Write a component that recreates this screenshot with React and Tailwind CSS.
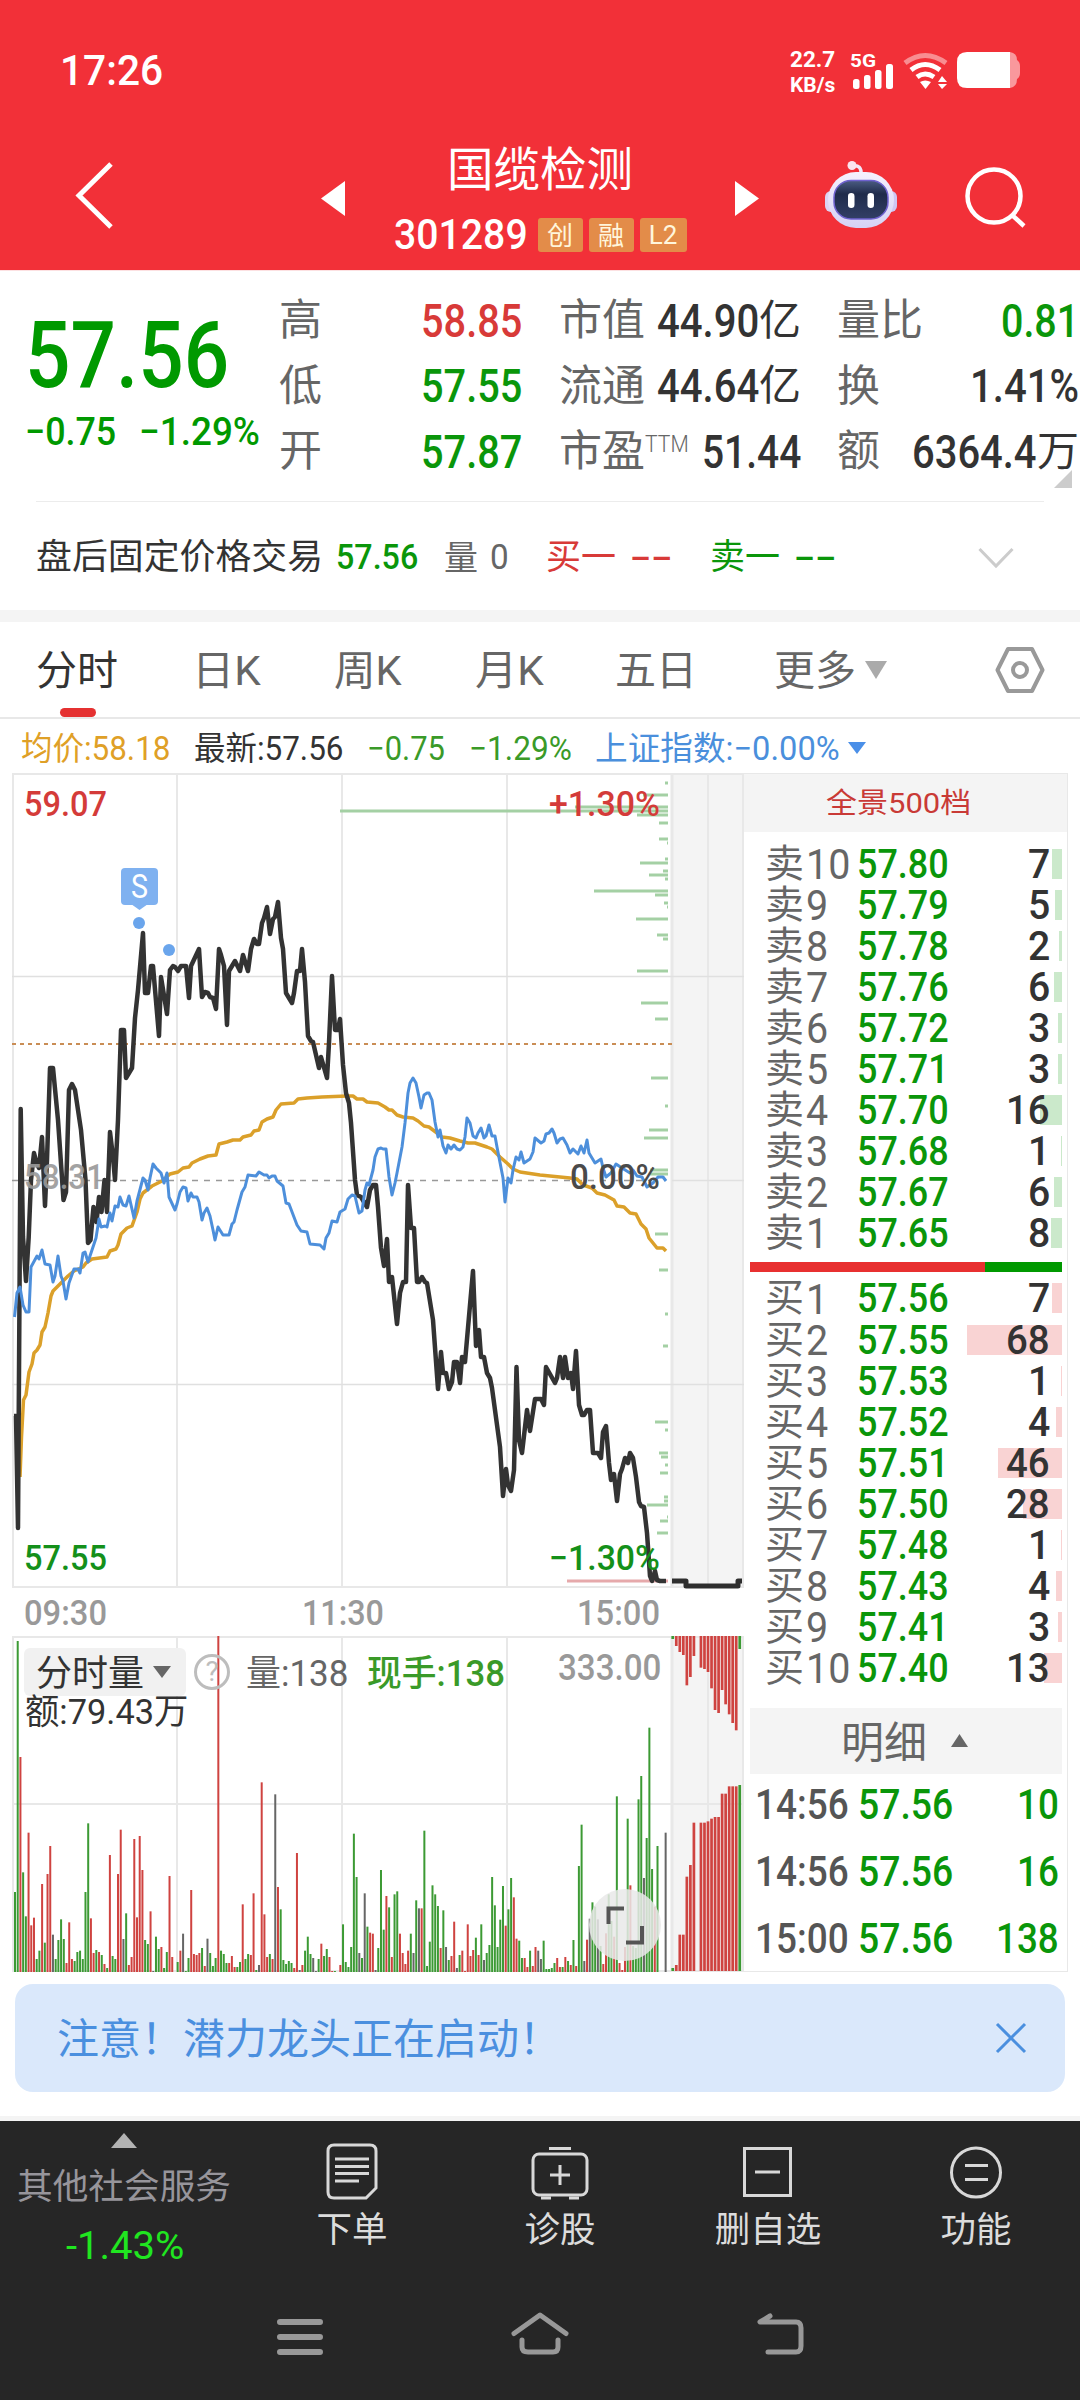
import React, { useLayoutEffect, useRef, useState } from 'react'
import clsx from 'clsx'

/* ---------- data ---------- */

const stats = [
  [
    { label: '高', value: '58.85', w: 101, color: 'text-[#d83a38]' },
    { label: '低', value: '57.55', w: 101, color: 'text-[#0a960a]' },
    { label: '开', value: '57.87', w: 101, color: 'text-[#0a960a]' },
  ],
  [
    { label: '市值', value: '44.90', unit: '亿', w: 102, color: 'text-[#333333]' },
    { label: '流通', value: '44.64', unit: '亿', w: 102, color: 'text-[#333333]' },
    { label: '市盈', sup: 'TTM', value: '51.44', w: 99, color: 'text-[#333333]' },
  ],
  [
    { label: '量比', value: '0.81', w: 78, color: 'text-[#0a960a]' },
    { label: '换', value: '1.41%', w: 109, color: 'text-[#333333]' },
    { label: '额', value: '6364.4', unit: '万', w: 125, color: 'text-[#333333]' },
  ],
]

const sells = [
  ['10', '57.80', 7], ['9', '57.79', 5], ['8', '57.78', 2], ['7', '57.76', 6], ['6', '57.72', 3],
  ['5', '57.71', 3], ['4', '57.70', 16], ['3', '57.68', 1], ['2', '57.67', 6], ['1', '57.65', 8],
]

const buys = [
  ['1', '57.56', 7], ['2', '57.55', 68], ['3', '57.53', 1], ['4', '57.52', 4], ['5', '57.51', 46],
  ['6', '57.50', 28], ['7', '57.48', 1], ['8', '57.43', 4], ['9', '57.41', 3], ['10', '57.40', 13],
]

const ticks = [
  ['14:56', '57.56', '10'],
  ['14:56', '57.56', '16'],
  ['15:00', '57.56', '138'],
]

const priceLine =
  '14,1416 16,1416 18,1528 20.7,1109 23,1237 26,1281 28.7,1237 31,1180 34,1153 36.5,1163 39,1168 42,1137 45,1206 47,1160 50,1068 53,1068 58,1120 63.5,1200 66,1192 69,1090 72,1084 75,1090 81,1130 85.5,1180 88,1243 90.5,1240 93.5,1207 96.5,1222 99,1197 101.5,1212 104.5,1180 107,1212 110,1132 113,1157 115,1180 118,1120 121,1030 124,1030 126,1078 132,1068 135,1018 138,990 143,933 145,993 148,993 151,966 153,966 159,1036 161,977 167,1014 170,970 173,966 175,967 178,971 181,966 186,966 189,998 191,966 199,949 202,997 205,992 208,993 210,997 213,998 216,1009 219,949 221,955 224,966 227,1025 229,971 235,961 240,971 243,955 248,971 251,949 254,939 257,944 259,944 262,923 264,918 267,907 270,934 273,919 275,917 278,902 281,938 283,949 286,993 292,1003 294,993 297,971 300,971 302,949 305,982 308,1036 311,1041 313,1042 319,1068 321,1057 327,1078 329,1043 332,976 335,1030 338,1030 340,1019 343,1065 346,1093 349,1103 351,1123 355,1180 357,1195 361,1197 367,1207 370,1190 373,1185 376,1185 378,1207 381,1248 384,1266 387,1239 389,1282 392,1277 397,1324 400,1293 403,1282 406,1282 408,1185 411,1228 414,1228 417,1282 419,1282 422,1277 425,1282 427,1283 433,1320 438,1389 441,1352 443,1373 446,1373 449,1389 452,1382 454,1362 457,1362 460,1383 462,1357 465,1362 473,1271 476,1346 479,1330 481,1357 484,1357 487,1373 490,1378 492,1388 500,1447 503,1496 506,1469 508,1485 511,1491 514,1470 516.5,1367 519,1440 522,1453 527,1410 530,1431 535,1399 541,1399 544,1405 546,1367 555,1383 557,1378 560,1357 563,1378 565,1357 568,1378 571,1373 573,1389 576,1351 579,1405 582,1415 584,1415 587,1410 590,1410 593,1453 598,1453 601,1458 603,1432 606,1426 609,1463 611,1480 614,1474 617,1501 620,1474 622,1469 625,1458 628,1463 630,1453 633,1458 636,1477 639,1502 641,1506 644,1507 647,1533 650,1576 652,1581 655,1571 657,1580 660,1581 666,1581'

const avgLine =
  '20,1477 21.5,1437 23.5,1400 26,1395 29,1372 32,1364 34,1353 37,1350 40,1345 42,1332 45,1327 48,1313 51,1296 53,1291 57,1287 62,1282 68,1276 74,1271 83,1267 86,1263 92,1259 107,1257 110,1251 116,1249 118,1245 121,1234 127,1228 132,1226 137,1212 140,1199 143,1193 152,1186 162,1181 170,1174 178,1172 183,1168 189,1167 192,1163 200,1159 208,1156 216,1155 219,1144 227,1142 233,1140 240,1140 243,1137 251,1135 254,1131 259,1130 262,1122 267,1119 273,1117 276,1110 281,1104 294,1103 298,1099 307,1098 322,1097 347,1096 353,1096 357,1099 363,1099 367,1102 378,1103 385,1107 389,1110 392,1110 397,1115 403,1117 413,1118 418,1121 424,1126 429,1127 437,1133 442,1137 450,1138 460,1141 468,1143 475,1143 487,1147 492,1149 500,1157 508,1164 513,1169 520,1172 540,1175 570,1178 577,1179 583,1185 592,1188 597,1193 605,1195 614,1200 617,1206 624,1207 630,1213 636,1214 641,1224 646,1229 649,1238 653,1243 657,1248 663,1248 666,1251'

const indexLine =
  '14.5,1317 17,1293 20,1287 23,1305 26,1312 29,1312 31,1267 37,1256 39,1259 42,1250 45,1264 50,1265 53,1282 55,1276 58,1256 61,1276 63,1281 66,1299 69,1283 74,1269 78,1269 80,1273 83,1253 85,1252 88,1262 93,1247 96,1238 99,1219 101,1227 105,1226 107,1227 110,1213 112,1221 115,1206 118,1207 120,1197 123,1205 126,1206 129,1196 134,1218 137,1201 143,1178 145,1180 148,1190 150,1178 153,1164 156,1168 161,1173 164,1183 167,1173 169,1197 175,1210 177,1204 180,1192 183,1187 186,1188 188,1201 191,1193 193,1197 197,1197 199,1202 202,1220 204,1213 207,1208 210,1216 213,1230 215,1240 218,1227 223,1235 229,1235 232,1224 234,1222 237,1210 242,1192 245,1187 248,1175 256,1176 259,1172 264,1175 267,1175 269,1178 272,1176 275,1176 277,1181 283,1186 286,1203 289,1204 297,1225 301,1231 307,1232 310,1244 320,1245 324,1249 326,1238 329,1233 332,1221 337,1222 340,1212 345,1209 348,1199 352,1195 355,1196 359,1213 362,1211 365,1190 367,1183 369,1185 373,1170 375,1157 378,1149 381,1148 383,1149 386,1149 389,1177 392,1195 395,1183 397,1173 402,1147 405,1123 408,1093 410,1083 413,1078 416,1083 419,1097 421,1108 424,1095 427,1093 429,1093 432,1100 435,1122 438,1137 440,1130 443,1146 446,1153 448,1145 451,1149 454,1145 457,1149 460,1150 463,1147 465,1137 467,1118 470,1123 473,1136 476,1138 478,1133 481,1128 484,1138 486,1136 489,1125 492,1136 495,1136 497,1147 503,1178 505,1202 508,1178 511,1183 513,1170 516,1157 519,1160 521,1152 524,1163 530,1159 533,1152 535,1138 541,1143 544,1141 546,1134 549,1133 552,1129 554,1133 557,1143 560,1139 563,1138 567,1145 570,1153 573,1149 578,1154 581,1146 584,1153 587,1140 589,1153 595,1163 601,1159 603,1168 606,1177 611,1173 616,1164 622,1168 630,1173 633,1170 637,1176 642,1177 647,1187 653,1183 658,1177 663,1177 666,1181'

// resting orders on the right edge: [left x, y]
const depth = [
  [665, 783], [643, 795], [575, 807], [340, 811], [637, 815], [659, 823], [659, 839], [667, 843], [665, 859],
  [640, 863], [663, 871], [649, 875], [665, 879], [594, 891], [655, 895], [664, 903], [667, 907], [636, 919],
  [657, 935], [663, 939], [637, 971], [641, 1003], [655, 1019], [651, 1078], [665, 1106], [649, 1130],
  [644, 1138], [650, 1170], [650, 1174], [655, 1234], [659, 1270], [665, 1314], [663, 1346], [655, 1422],
  [665, 1430], [659, 1453], [661, 1457], [665, 1465], [660, 1473], [664, 1497], [664, 1501], [647, 1505],
  [667, 1517], [660, 1521], [657, 1533],
]

// one entry per minute: colour + top of the bar, in thirds of a pixel
const volume =
  'g816 g63 r411 g757 g889 r638 r916 r893 g1017 g992 r792 g968 r762 r678 k944 g1017 g960 g898 g957 r1029 r907 r1017 g1023 g996 g992 g1017 g816 g610 r895 r999 g990 r996 g1005 r1032 g1044 r705 g1008 g1017 r762 r629 k957 g880 r1035 r1011 r657 r892 r648 r750 g960 g972 r874 k1053 g950 g987 r981 g1044 g996 r768 r1011 - g1026 r992 k941 g1053 g1014 r810 r1002 r1005 r999 g984 r1038 k956 g999 g1038 g1014 r48 g992 g1002 g1029 r1029 r1008 r1041 g1041 g1026 r853 g1017 g1002 r1005 r820 g1050 k1035 r487 r883 r1011 g1002 r1017 k523 r801 g868 g1020 g1032 g1023 g1029 r1044 r699 k1050 r1035 g992 g950 g1002 k1014 k1053 g1017 r971 g1008 g987 r1011 r1053 g1053 - r1035 g913 g1026 g1041 g981 g641 g771 k999 g1014 k820 g920 r938 r941 k1050 g984 g750 g929 r828 g862 r1011 g823 g814 r941 r999 r1032 r992 g941 k999 g841 k865 r865 g632 g1038 g965 g796 g823 g858 r984 g871 k981 g1020 r1008 r905 k1044 g1005 r992 r1053 r913 r1008 r990 g953 r1005 g913 k1020 g999 g975 g771 g856 g981 g899 g798 r917 g868 g774 r832 r956 g962 g1014 r1014 r1041 g992 r1038 r981 k992 k1017 g962 g1047 g1047 g1044 g1029 r1014 r1041 g1041 r1011 g1023 r1035 g960 r1038 g738 g614 k1023 r959 k896 g847 g860 k898 g978 r1032 r940 g823 g903 r950 g529 r1029 r1050 r981 g596 r796 g978 g984 g538 g468 k774 g654 g323 g747 r860 g678 - - k638'.split(' ')

const barColor = { g: '#3c9a34', r: '#cf4340', k: '#666666' }

// call auction after the close: lower end of the hanging bars, upper end of the standing ones
const auctionTop = [57, 78, 96, 105, 196, 171, 108, 0, 143, 147, 156, 205, 270, 279, 210, 253, 283, 309, 331, 87]
const auctionBottom = [1044, 1035, 944, 944, 770, 735, 608, 0, 608, 608, 604, 596, 591, 591, 521, 521, 499, 499, 499, 495]

/* ---------- helpers ---------- */

// squeezes its text into w pixels, for the narrow digits
const Fit = ({ w, className, children }) => {
  const ref = useRef(null)
  const [scale, setScale] = useState(1)

  useLayoutEffect(() => {
    setScale(w / ref.current.offsetWidth)
  }, [w, children])

  return (
    <span className={clsx('inline-flex shrink-0 leading-none', className)} style={{ width: w }}>
      <span ref={ref} className="shrink-0 origin-left whitespace-nowrap" style={{ transform: `scaleX(${scale})` }}>
        {children}
      </span>
    </span>
  )
}

const Label = ({ x, y, w, size = 35, fill = '#999999', weight = 500, children }) => (
  <text x={x} y={y} fontSize={size} fill={fill} fontWeight={weight} textLength={w} lengthAdjust="spacingAndGlyphs">
    {children}
  </text>
)

/* ---------- header ---------- */

const StatusBar = () => (
  <div className="flex h-[140px] items-center pl-[60px] pr-[58px] font-medium">
    <Fit w={103} className="text-[43px]">17:26</Fit>

    <div className="ml-auto flex items-center">
      <div className="flex flex-col gap-1 pt-[3px] font-bold">
        <Fit w={45} className="text-[22px]">22.7</Fit>
        <Fit w={45} className="text-[20px]">KB/s</Fit>
      </div>

      {/* signal */}
      <svg className="ml-[13px] h-[42px] w-[46px]" viewBox="848 50 46 42">
        <text x="850" y="68" fontSize="18" fontWeight="700" fill="#fff" textLength="26" lengthAdjust="spacingAndGlyphs">5G</text>
        <g fill="#fff">
          <rect x="853" y="80" width="6.500" height="10" rx="2.500" />
          <rect x="864" y="76" width="6.500" height="14" rx="2.500" />
          <rect x="875" y="71" width="6.500" height="19" rx="2.500" />
          <rect x="886" y="65" width="7" height="25" rx="2.500" />
        </g>
      </svg>

      {/* wifi */}
      <svg className="ml-2 h-[42px] w-12" viewBox="902 50 48 42" fill="none" stroke="#fff" strokeWidth="5">
        <path d="M905 64 Q925 49 946 64" opacity=".45" />
        <path d="M911 71 Q925 60 940 71" />
        <path d="M917 78 Q925 72 934 78" />
        <path d="M920 83 Q925 80 931 83 L925.5 90 Z" fill="#fff" stroke="none" />
        <path d="M938 83 L942 77 L947 83 Z M938 85 L942 90 L947 85 Z" fill="#fff" stroke="none" />
      </svg>

      {/* battery */}
      <svg className="ml-[6px] h-[38px] w-[66px]" viewBox="956 52 66 38" fill="#fff">
        <path d="M1010 53 Q1017 54 1017 61 Q1020 63 1020 67 V74 Q1020 78 1017 80 Q1017 88 1010 89 Z" opacity=".5" />
        <path d="M967 53 H1010 V89 H967 Q957 89 957 79 V63 Q957 53 967 53 Z" />
      </svg>
    </div>
  </div>
)

const Robot = () => (
  <svg className="ml-[64px] mt-[18px] h-[76px] w-[76px]" viewBox="823 158 76 76">
    <defs>
      <linearGradient id="face" x1="0" y1="0" x2="0" y2="1">
        <stop offset="0" stopColor="#4b5c82" />
        <stop offset="0.35" stopColor="#1f2b4a" />
        <stop offset="1" stopColor="#323f66" />
      </linearGradient>
      <linearGradient id="shell" x1="0" y1="0" x2="0" y2="1">
        <stop offset="0" stopColor="#f6f1fd" />
        <stop offset="1" stopColor="#d5d2f5" />
      </linearGradient>
    </defs>
    <path d="M852 166 Q862 164 861 175" fill="none" stroke="#f3e9f8" strokeWidth="3.500" />
    <circle cx="852" cy="165.500" r="4.500" fill="#fbe4ee" />
    <rect x="825" y="191" width="12" height="21" rx="6" fill="#dcd4f3" />
    <rect x="885" y="191" width="12" height="21" rx="6" fill="#cfc6f2" />
    <rect x="828" y="172" width="66" height="56" rx="28" fill="url(#shell)" />
    <rect x="834" y="180.500" width="54" height="38.500" rx="17" fill="url(#face)" stroke="#6f62cf" strokeWidth="1.500" />
    <rect x="848" y="193" width="6.500" height="15" rx="3.200" fill="#fff" />
    <rect x="867.500" y="193" width="6.500" height="15" rx="3.200" fill="#fff" />
  </svg>
)

const Header = () => (
  <header className="h-[270px] bg-[#f23038] text-white">
    <StatusBar />

    <div className="flex h-[130px] pl-[72px]">
      <svg className="mt-5 h-[72px] w-11" viewBox="72 160 44 72" fill="none" stroke="#fff" strokeWidth="5">
        <path d="M111 164 L79 195.500 L111 227" />
      </svg>

      <svg className="ml-[205px] mt-[41px] h-[35px] w-6" viewBox="0 0 24 35" fill="#fff">
        <path d="M24 0 V35 L0 17.500 Z" />
      </svg>

      {/* name and code */}
      <div className="w-[390px]">
        <div className="flex h-[61px] items-center justify-center text-[46.5px] leading-none">国缆检测</div>
        <div className="flex h-[66px] items-center justify-center pt-px">
          <Fit w={134} className="text-[43px] font-medium">301289</Fit>
          <div className="ml-[10px] flex gap-[6px] text-[26px] leading-none text-[#fff6dc]">
            <span className="flex h-[34px] w-[45px] items-center justify-center rounded-[3px] bg-[#e38c49] pt-[2px]">创</span>
            <span className="flex h-[34px] w-[45px] items-center justify-center rounded-[3px] bg-[#e38c49] pt-[2px]">融</span>
            <span className="flex h-[34px] w-[47px] items-center justify-center rounded-[3px] bg-[#e38c49] pt-px">L2</span>
          </div>
        </div>
      </div>

      <svg className="mt-[41px] h-[35px] w-6" viewBox="0 0 24 35" fill="#fff">
        <path d="M0 0 V35 L24 17.500 Z" />
      </svg>

      <Robot />

      <svg className="ml-[64px] mt-[25px] h-[66px] w-[66px]" viewBox="963 165 66 66" fill="none" stroke="#fff" strokeWidth="4.500">
        <circle cx="994" cy="196" r="26.500" />
        <path d="M1012 215 L1024 226" />
      </svg>
    </div>
  </header>
)

/* ---------- quote ---------- */

const Quote = () => (
  <section className="relative flex h-[231px] border-t border-[#fce1e2]">
    <div className="w-[279px] pl-[25px] pt-[38px] font-medium text-[#009900]">
      <Fit w={204} className="text-[93px]">57.56</Fit>
      <div className="mt-[11px] flex gap-[23px] text-[39px]">
        <Fit w={91}>−0.75</Fit>
        <Fit w={121}>−1.29%</Fit>
      </div>
    </div>

    <div className="flex pt-[17px]">
      {stats.map((col, i) => (
        <div key={i} className={clsx(i === 0 ? 'w-[243px]' : 'w-[242px]', i === 1 && 'ml-[37px]', i === 2 && 'ml-9')}>
          {col.map((s) => (
            <div key={s.label} className="flex h-[65.5px] items-center justify-between text-[43px] leading-none">
              <span className="relative text-[#666666]">
                {s.label}
                {s.sup && <Fit w={44} className="absolute left-full top-[2px] text-[24px] font-light">{s.sup}</Fit>}
              </span>
              <span className={clsx('flex items-center', s.color)}>
                <Fit w={s.w} className="text-[46px] font-medium">{s.value}</Fit>
                {s.unit && <span className="text-[42px]">{s.unit}</span>}
              </span>
            </div>
          ))}
        </div>
      ))}
    </div>

    <svg className="absolute bottom-[13px] right-2 h-[18px] w-[18px]" viewBox="0 0 18 18" fill="#cccccc">
      <path d="M18 0 V18 H0 Z" />
    </svg>
  </section>
)

const AfterHours = () => (
  <section className="border-b-[12px] border-[#f4f4f4]">
    <div className="mx-9 h-px bg-[#ececec]" />
    <div className="flex h-[108px] items-center pl-9 pr-[66px] pt-[3px] text-[35px] leading-none">
      <Fit w={287} className="text-[35.500px] text-[#333333]">盘后固定价格交易</Fit>
      <Fit w={82} className="ml-[13px] font-medium text-[#0a960a]">57.56</Fit>
      <Fit w={34} className="ml-[26px] text-[34px] text-[#666666]">量</Fit>
      <Fit w={19} className="ml-3 text-[#666666]">0</Fit>
      <Fit w={70} className="ml-[37px] text-[#d83a38]">买一</Fit>
      <Fit w={43} className="ml-[14px] font-medium text-[#d83a38]">--</Fit>
      <Fit w={70} className="ml-[37px] text-[#0a960a]">卖一</Fit>
      <Fit w={43} className="ml-[14px] font-medium text-[#0a960a]">--</Fit>
      <svg className="ml-auto h-[22px] w-9" viewBox="0 0 36 22" fill="none" stroke="#cccccc" strokeWidth="3">
        <path d="M1.500 2 L18 19 L34.500 2" />
      </svg>
    </div>
  </section>
)

const Tabs = () => (
  <nav className="flex h-[97px] items-center border-b-2 border-[#e8e8e8] pl-[36px] text-[41px] leading-none text-[#666666]">
    <div className="relative flex h-full w-[82px] items-center pt-1 text-[#333333]">
      分时
      <span className="absolute bottom-0 left-[24px] h-[9px] w-9 rounded-[5px] bg-[#e53131]" />
    </div>
    <Fit w={69} className="ml-[74px] pt-1">日K</Fit>
    <Fit w={68} className="ml-[73px] pt-1">周K</Fit>
    <Fit w={69} className="ml-[73px] pt-1">月K</Fit>
    <span className="ml-[71px] pt-1">五日</span>
    <span className="ml-[77px] pt-1">更多</span>
    <svg className="ml-[9px] h-[18px] w-[22px]" viewBox="0 0 22 18" fill="#aaaaaa">
      <path d="M0 0 H22 L11 18 Z" />
    </svg>
    <svg className="ml-auto mr-[34px] h-[50px] w-[52px]" viewBox="994 645 52 50" fill="none" stroke="#999999" strokeWidth="4">
      <path d="M1008 649 H1032 L1042.500 670 L1032 691 H1008 L997.500 670 Z" strokeLinejoin="round" />
      <circle cx="1020" cy="670" r="7" />
    </svg>
  </nav>
)

const Legend = () => (
  <div className="flex h-[54px] items-center pl-[21px] pt-[7px] text-[32.500px] leading-none">
    <Fit w={150} className="text-[#dfa027]">均价:58.18</Fit>
    <Fit w={150} className="ml-[23px] text-[#333333]">最新:57.56</Fit>
    <Fit w={78} className="ml-[23px] text-[#3a9a28]">−0.75</Fit>
    <Fit w={103} className="ml-6 text-[#3a9a28]">−1.29%</Fit>
    <Fit w={245} className="ml-[23px] text-[#4a8fdc]">上证指数:−0.00%</Fit>
    <svg className="-mt-1 ml-[8px] h-3 w-[18px]" viewBox="0 0 18 12" fill="#4a8fe8">
      <path d="M0 0 H18 L9 12 Z" />
    </svg>
  </div>
)

/* ---------- charts ---------- */

const PriceChart = () => (
  <svg className="block h-[863px] w-[744px]" viewBox="0 773 744 863">
    <rect x="672" y="774" width="72" height="813" fill="#f4f4f4" />
    <g stroke="#e8e8e8" strokeWidth="2" fill="none">
      <path d="M12 774 H744 M12 1587 H744" />
      <path d="M13 774 V1587 M177 774 V1587 M342 774 V1587 M507 774 V1587 M708 774 V1587 M743 774 V1587" />
      <path d="M672 774 V1587" strokeWidth="3" />
      <path d="M12 976.500 H744 M12 1384.500 H744 M672 1180.500 H744" stroke="#e0e0e0" strokeWidth="1.500" />
    </g>

    <path d="M12 1044 H672" stroke="#c98d55" strokeWidth="2" strokeDasharray="4 4" />
    <path d="M12 1180.500 H650" stroke="#999999" strokeWidth="1.500" strokeDasharray="6 6" />

    <g stroke="#a4d0a4" strokeWidth="3">
      {depth.map(([x, y]) => (
        <path key={y} d={`M${x} ${y} H668`} />
      ))}
      <path d="M567 1581 H668" stroke="#e6a9ab" />
    </g>

    <g fill="none" strokeLinejoin="round">
      <polyline points={avgLine} stroke="#dba02a" strokeWidth="3.500" />
      <polyline points={priceLine} stroke="#333333" strokeWidth="4.500" />
      <polyline points={indexLine} stroke="#4d8fdb" strokeWidth="3" />
      <path d="M672 1581 H686 V1586 H738 V1581 H742" stroke="#2e2e2e" strokeWidth="5" />
    </g>

    {/* sell marker */}
    <rect x="121" y="868" width="37" height="37" rx="4" fill="#7fb1f0" />
    <path d="M131 904 L139.500 910 L148 904 Z" fill="#7fb1f0" />
    <text x="139.500" y="898" fontSize="33" fill="#fff" textAnchor="middle" textLength="17" lengthAdjust="spacingAndGlyphs">S</text>
    <circle cx="139" cy="923" r="6" fill="#6aa5ec" />
    <circle cx="169" cy="950" r="6" fill="#6aa5ec" />

    <Label x={24} y={816} w={83} fill="#d43b39">59.07</Label>
    <Label x={549} y={816} w={111} fill="#d43b39">+1.30%</Label>
    <g opacity=".9">
      <Label x={24} y={1189} w={80} fill="#999999">58.31</Label>
    </g>
    <Label x={570} y={1189} w={90} fill="#4a4a4a">0.00%</Label>
    <Label x={24} y={1570} w={83} fill="#14901a">57.55</Label>
    <Label x={549} y={1570} w={111} fill="#14901a">−1.30%</Label>
    <Label x={24} y={1625} w={83}>09:30</Label>
    <Label x={302} y={1625} w={82}>11:30</Label>
    <Label x={577} y={1625} w={83}>15:00</Label>
  </svg>
)

const VolumeChart = () => (
  <div className="relative">
    <svg className="block h-[336px] w-[744px]" viewBox="0 1636 744 336">
      <rect x="672" y="1637" width="72" height="335" fill="#f4f4f4" />
      <g stroke="#e8e8e8" strokeWidth="2" fill="none">
        <path d="M12 1637 H744 M12 1804 H744 M12 1971 H744" />
        <path d="M13 1636 V1972 M177 1636 V1972 M342 1636 V1972 M507 1636 V1972 M708 1636 V1972 M743 1636 V1972" />
        <path d="M672 1636 V1972" strokeWidth="3" />
      </g>

      {volume.map((v, i) =>
        v === '-' ? null : (
          <rect
            key={i}
            x={14 + i * 2.711}
            y={1620 + v.slice(1) / 3}
            width="2"
            height={352 - v.slice(1) / 3}
            fill={barColor[v[0]]}
          />
        )
      )}

      {auctionTop.map((v, i) =>
        v === 0 ? null : (
          <g key={i} fill={i === 0 || i === 19 ? '#3c9a34' : '#cf4340'}>
            <rect x={671.4 + i * 3.526} y="1636" width="2.700" height={v / 3 - 16} />
            <rect x={671.4 + i * 3.526} y={1620 + auctionBottom[i] / 3} width="2.700" height={351 - auctionBottom[i] / 3} />
          </g>
        )
      )}
    </svg>

    {/* indicator bar over the chart */}
    <div className="absolute left-6 top-3 flex h-12 w-[640px] items-center text-[36px] leading-none">
      <div className="flex h-12 w-[162px] items-center rounded-md bg-[#f1f1f1] pl-3 text-[#333333]">
        <Fit w={108} className="pt-[3px]">分时量</Fit>
        <svg className="ml-[9px] h-3 w-[18px]" viewBox="0 0 18 12" fill="#666666">
          <path d="M0 0 H18 L9 12 Z" />
        </svg>
      </div>
      <span className="ml-2 flex h-9 w-9 items-center justify-center rounded-full border-[3px] border-[#bdbdbd] text-[28px] text-[#bdbdbd]">?</span>
      <Fit w={102} className="ml-[16px] pt-[3px] text-[#666666]">量:138</Fit>
      <Fit w={138} className="ml-[19px] pt-[3px] font-medium text-[#3a9a28]">现手:138</Fit>
      <Fit w={103} className="-mt-[9px] ml-[53px] font-medium text-[#999999]">333.00</Fit>
    </div>
    <div className="absolute left-[25px] top-[59px] flex text-[35px]">
      <Fit w={163} className="text-[#333333]">额:79.43万</Fit>
    </div>

    <svg className="absolute bottom-[11px] left-[589px] h-[72px] w-[72px]" viewBox="0 0 72 72" fill="none" stroke="#555555" strokeWidth="4">
      <circle cx="36" cy="36" r="36" fill="#e9e9e9" fillOpacity=".85" stroke="none" />
      <path d="M19.500 35 V19.500 H35 M37 53.500 H53 V37" />
    </svg>
  </div>
)

/* ---------- order book ---------- */

const Level = ({ side, row, bar }) => {
  const [no, price, vol] = row
  return (
    <div className="relative flex h-[41.05px] items-center pl-[21px] pr-[17px]">
      <span className={clsx('absolute right-[5px] top-[5px] h-[30px]', bar)} style={{ width: vol * 1.4 }} />
      <span className="relative w-[41px] text-[39px] leading-none text-[#666666]">{side}</span>
      <span className="relative flex w-[51px] text-[#666666]">
        <Fit w={no.length * 22} className="text-[43px]">{no}</Fit>
      </span>
      <Fit w={92} className="relative text-[41px] font-medium text-[#0a960a]">{price}</Fit>
      <span className="relative ml-auto flex">
        <Fit w={String(vol).length * 22} className="text-[41px] font-medium text-[#333333]">{vol}</Fit>
      </span>
    </div>
  )
}

const OrderBook = () => (
  <aside className="h-[1199px] w-[324px] border-b border-r border-[#e8e8e8]">
    <div className="flex h-[59px] items-center justify-center border-t border-[#e8e8e8] bg-[#f4f4f4] pr-[15px]">
      <Fit w={145} className="pt-[2px] text-[28px] text-[#c93a36]">全景500档</Fit>
    </div>

    <div className="mt-3">
      {sells.map((r) => <Level key={r[0]} side="卖" row={r} bar="bg-[#cbe9cb]" />)}
    </div>

    <div className="ml-[6px] mr-[5px] mt-2 flex h-[10px]">
      <div className="w-[235px] bg-[#e83030]" />
      <div className="flex-1 bg-[#009900]" />
    </div>

    <div className="mt-[6px]">
      {buys.map((r) => <Level key={r[0]} side="买" row={r} bar="bg-[#f9d3d3]" />)}
    </div>

    <div className="ml-[6px] mr-[5px] mt-[19px] flex h-[66px] items-center bg-[#f4f4f4] pl-[91px] text-[43px] leading-none text-[#666666]">
      <span className="pt-[6px]">明细</span>
      <svg className="ml-6 h-[13px] w-[17px]" viewBox="0 0 17 13" fill="#666666">
        <path d="M8.500 0 L17 13 H0 Z" />
      </svg>
    </div>

    <div className="-mt-[2px] text-[42px] font-medium">
      {ticks.map(([time, price, vol], i) => (
        <div key={i} className="flex h-[67px] items-center pl-[11px] pr-2 text-[#0a960a]">
          <Fit w={94} className="text-[#555555]">{time}</Fit>
          <Fit w={95} className="ml-[9px]">{price}</Fit>
          <span className="ml-auto flex"><Fit w={vol.length * 21}>{vol}</Fit></span>
        </div>
      ))}
    </div>
  </aside>
)

/* ---------- bottom ---------- */

const Banner = () => (
  <div className="mx-[15px] mt-3 flex h-[108px] items-center rounded-[18px] bg-[#dae8fb] pl-[42px] pr-[38px] text-[42px] leading-none text-[#4a8fdf]">
    <span className="pt-1">注意！潜力龙头正在启动！</span>
    <svg className="ml-auto h-8 w-8" viewBox="0 0 32 32" fill="none" stroke="#4a8fdf" strokeWidth="3">
      <path d="M2 2 L30 30 M30 2 L2 30" />
    </svg>
  </div>
)

const actions = [
  {
    name: '下单',
    icon: (
      <>
        <path d="M12 4 H48 Q54 4 54 10 V47 L44 57 H12 Q6 57 6 51 V10 Q6 4 12 4 Z" />
        <path d="M13 18 H47 M13 25.500 H47 M13 32.500 H47 M13 40 H37" />
      </>
    ),
  },
  {
    name: '诊股',
    icon: (
      <>
        <rect x="3" y="13" width="54" height="41" rx="6" />
        <path d="M19 7.500 H41 M30 24 V44 M20 34 H40 M11 57 H21 M39 57 H49" />
      </>
    ),
  },
  {
    name: '删自选',
    icon: (
      <>
        <rect x="6.500" y="7.500" width="46" height="47" />
        <path d="M17 31 H42" />
      </>
    ),
  },
  {
    name: '功能',
    icon: (
      <>
        <circle cx="30" cy="31.500" r="24.500" />
        <path d="M19 24.500 H42 M19 38.500 H42" />
      </>
    ),
  },
]

const Footer = () => (
  <footer className="mt-6 h-[284px] border-t-[5px] border-[#f4f4f4] bg-[#262626]">
    <div className="flex h-[160px]">
      <div className="flex w-[248px] flex-col items-center pt-3 leading-none">
        <svg className="h-[15px] w-[26px]" viewBox="0 0 26 15" fill="#b3b3b3">
          <path d="M13 0 L26 15 H0 Z" />
        </svg>
        <Fit w={214} className="mt-[22px] text-[35.500px] text-[#97959b]">其他社会服务</Fit>
        <Fit w={118} className="ml-[2px] mt-[21px] text-[38px] text-[#20e620]">-1.43%</Fit>
      </div>

      {actions.map((a) => (
        <div key={a.name} className="flex w-[208px] flex-col items-center pt-5 text-[35.500px] leading-none text-[#dcdcdc]">
          <svg className="h-[60px] w-[60px]" viewBox="0 0 60 60" fill="none" stroke="#d8d8d8" strokeWidth="3">
            {a.icon}
          </svg>
          <span className="mt-3">{a.name}</span>
        </div>
      ))}
    </div>

    {/* system keys */}
    <svg className="block h-[119px] w-[1080px]" viewBox="0 2281 1080 119" fill="none" stroke="#989898" strokeWidth="6" strokeLinecap="round" strokeLinejoin="round">
      <path d="M280 2322 H320 M280 2337 H320 M280 2352 H320" />
      <path d="M514 2333.500 L540 2315 L566 2333.500 M522 2340 V2347 Q522 2352 528 2352 H553 Q558 2352 558 2347 V2340" strokeWidth="5" />
      <path d="M770 2316 L760 2322 H796 Q801 2322 801 2328 V2346 Q801 2352 796 2352 H768" strokeWidth="5" />
    </svg>
  </footer>
)

const App = () => (
  <div className="h-[2400px] w-[1080px] overflow-hidden bg-white font-[Roboto,'Noto_Sans_CJK_SC',sans-serif]">
    <Header />
    <Quote />
    <AfterHours />
    <Tabs />
    <Legend />

    <main className="flex">
      <div className="w-[744px]">
        <PriceChart />
        <VolumeChart />
      </div>
      <OrderBook />
    </main>

    <Banner />
    <Footer />
  </div>
)

export default App
